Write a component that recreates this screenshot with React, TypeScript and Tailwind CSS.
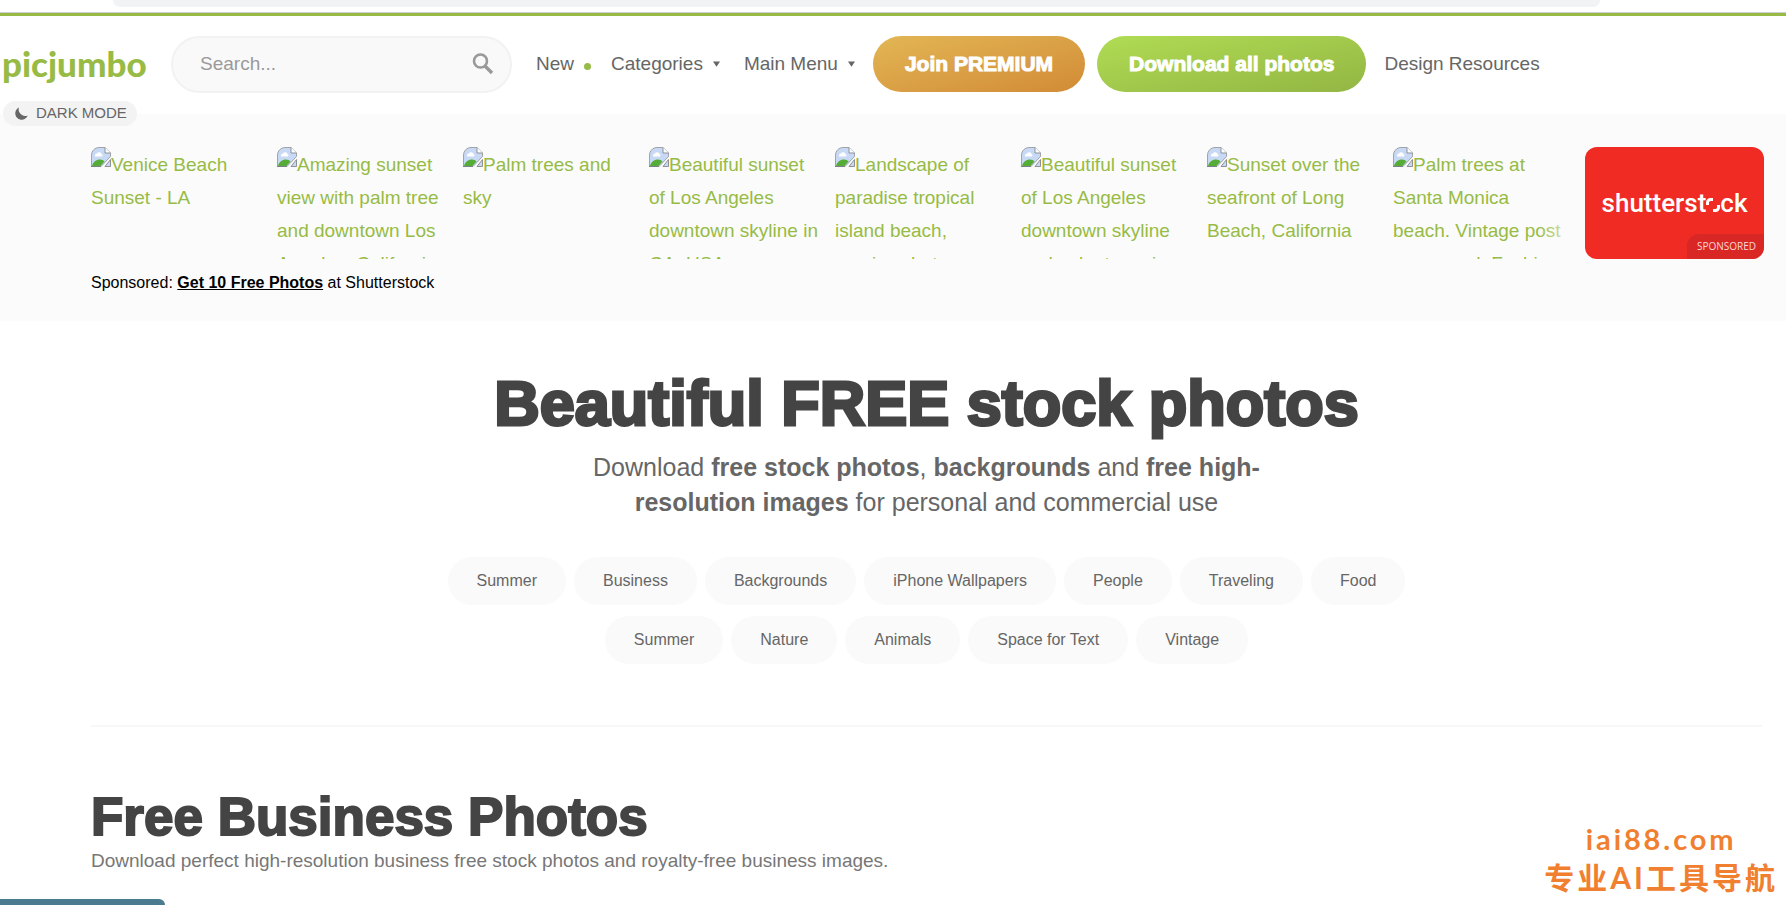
import type { ReactNode } from "react";

const SLIDES = [
  ["Venice Beach", "Sunset - LA"],
  ["Amazing sunset", "view with palm tree", "and downtown Los", "Angeles, California"],
  ["Palm trees and", "sky"],
  ["Beautiful sunset", "of Los Angeles", "downtown skyline in", "CA, USA"],
  ["Landscape of", "paradise tropical", "island beach,", "sunrise shot"],
  ["Beautiful sunset", "of Los Angeles", "downtown skyline", "and palm trees in"],
  ["Sunset over the", "seafront of Long", "Beach, California"],
  ["Palm trees at", "Santa Monica", "beach. Vintage post", "processed. Fashion"],
];

const TAGS = [
  ["Summer", "Business", "Backgrounds", "iPhone Wallpapers", "People", "Traveling", "Food"],
  ["Summer", "Nature", "Animals", "Space for Text", "Vintage"],
];

function MissingImage() {
  return (
    <svg viewBox="0 0 20 20" className="inline-block h-5 w-5 align-[4px]" aria-hidden="true">
      <path d="M.5 19.5V8A7.500 7.500 0 0 1 8 .5h6l5.500 5.500v3.500L10 19.500z" fill="#c8d9f5" stroke="#a0a3a7" />
      <path d="M14 .5V6h5.500" fill="#fff" stroke="#8e9195" />
      <path d="M4 8.500a2 2 0 0 1 2-2 2.500 2.500 0 0 1 4.500.5 1.500 1.500 0 0 1 .5 2.500H4z" fill="#fff" />
      <path d="M1 19c1-4 4-6.500 8-6.500 2 0 3.500.8 4.500 2L9.500 19z" fill="#55ad37" />
      <path d="M19.500 12.500v7H14z" fill="#c8d9f5" stroke="#8e9195" />
      <path d="M0 19.500h10" stroke="#7e8286" />
    </svg>
  );
}

function SearchIcon() {
  return (
    <svg viewBox="0 0 22 22" className="h-[22px] w-[22px]" fill="none" stroke="#999" aria-hidden="true">
      <circle cx="8.500" cy="8" r="6.500" strokeWidth="2.600" />
      <path d="M13 13l7 7" strokeWidth="3.400" />
    </svg>
  );
}

function NavLink({ children, arrow }: { children: ReactNode; arrow?: boolean }) {
  return (
    <a href="#" className="flex items-center whitespace-nowrap">
      {children}
      {arrow && (
        <svg viewBox="0 0 8 6" className="ml-2.5 h-1.5 w-[7px]" fill="#666" aria-hidden="true">
          <path d="M0 0h8L4 6z" />
        </svg>
      )}
    </a>
  );
}

/* White Shutterstock wordmark, the "o" is the broken viewfinder ring */
function ShutterstockLogo() {
  return (
    <span className="flex items-baseline font-['Roboto',sans-serif] text-[26px] leading-8 font-medium text-white">
      shutterst
      <svg viewBox="0 0 14 14" className="h-3.5 w-3.5" fill="none" stroke="#fff" strokeWidth="3" aria-hidden="true">
        <path d="M1.500 7V4.500a3 3 0 0 1 3-3H7" />
        <path d="M12.500 7v2.500a3 3 0 0 1-3 3H7" />
      </svg>
      ck
    </span>
  );
}

function Header() {
  return (
    <header className="relative flex h-[98px] items-center bg-white pb-0.5 text-[19px] text-[#666]">
      <a
        href="#"
        className="w-[147px] shrink-0 pb-0.5 pl-0.5 font-['Lato',sans-serif] text-[35px] leading-10 font-black text-[#97bb45]"
      >
        picjumbo
      </a>
      <form className="ml-6 flex h-[57px] w-[341px] shrink-0 items-center rounded-full border-2 border-[#f2f2f2] bg-[#f9f9f9] pr-4 pl-[27px]">
        <input
          type="search"
          aria-label="Search photos"
          placeholder="Search..."
          className="min-w-0 flex-1 bg-transparent outline-none placeholder:text-[#999]"
        />
        <button type="button" aria-label="Search">
          <SearchIcon />
        </button>
      </form>
      <nav className="ml-6 flex items-center">
        <NavLink>
          New
          <span className="mt-1 ml-2.5 h-[7px] w-[7px] rounded-full bg-[#97bb45]" />
        </NavLink>
        <span className="w-5" />
        <NavLink arrow>Categories</NavLink>
        <span className="w-6" />
        <NavLink arrow>Main Menu</NavLink>
      </nav>
      <div className="ml-[18px] flex gap-3 text-[21px] font-bold whitespace-nowrap text-white [-webkit-text-stroke:1px_#fff]">
        <a href="#" className="flex h-14 items-center rounded-full bg-linear-to-br from-[#e2b655] to-[#d28b35] px-8">
          Join PREMIUM
        </a>
        <a href="#" className="flex h-14 items-center rounded-full bg-linear-to-br from-[#b0dc54] to-[#93b643] px-8">
          Download all photos
        </a>
      </div>
      <a href="#" className="ml-[18px] whitespace-nowrap">
        Design Resources
      </a>

      <button
        type="button"
        className="absolute top-[85px] left-[3px] z-10 flex h-[25px] items-center gap-2 rounded-full bg-[#f3f3f3] pr-2.5 pl-3 text-[15px]"
      >
        <svg viewBox="0 0 13 13" className="h-[13px] w-[13px]" fill="#666" aria-hidden="true">
          <path d="M4 .5A6.400 6.400 0 1 0 12.700 8.500 6 6 0 0 1 7 8 6 6 0 0 1 4 .5z" />
        </svg>
        DARK MODE
      </button>
    </header>
  );
}

function SponsoredStrip() {
  return (
    <section className="bg-[#fbfbfb] pt-[33px] pr-[22px] pb-[26px] pl-[91px]">
      <div className="relative">
        <div className="flex h-28 gap-[18px] overflow-hidden text-[19px] leading-[33px] text-[#97bb45]">
          {SLIDES.map((lines, i) => (
            <a key={i} href="#" className="w-[168px] shrink-0 whitespace-nowrap">
              {lines.map((line, n) => (
                <span key={line} className="block">
                  {n === 0 && <MissingImage />}
                  {line}
                </span>
              ))}
            </a>
          ))}
        </div>
        <div className="absolute top-0 right-[179px] h-full w-12 bg-linear-to-r from-transparent to-[#fbfbfb]" />
        <a
          href="#"
          className="absolute top-0 right-0 flex h-full w-[179px] items-center justify-center overflow-hidden rounded-xl bg-[#ef2b24]"
        >
          <ShutterstockLogo />
          <span className="absolute right-0 bottom-0 flex h-[25px] items-center rounded-tl-xl bg-[#d82724] px-2 pl-2.5 font-['Open_Sans',sans-serif] text-[10px] text-[#fbd5d3]">
            SPONSORED
          </span>
        </a>
      </div>
      <p className="mt-3 leading-6 text-black">
        Sponsored:{" "}
        <a href="#" className="font-bold underline">
          Get 10 Free Photos
        </a>{" "}
        at Shutterstock
      </p>
    </section>
  );
}

function Hero() {
  return (
    <section className="border-b-2 border-[#f7f7f7] pt-[47px] pb-[61px] text-center">
      <h1 className="text-[63px] leading-[70px] font-bold text-[#444] [-webkit-text-stroke:3px_#444]">
        Beautiful FREE stock photos
      </h1>
      <p className="mx-auto mt-3 max-w-[700px] text-[25px] leading-[35px] text-[#666]">
        Download <b>free stock photos</b>, <b>backgrounds</b> and <b>free high-resolution images</b> for personal
        and commercial use
      </p>
      <div className="mt-[37px] flex flex-col gap-[11px]">
        {TAGS.map((row, i) => (
          <div key={i} className="flex justify-center gap-2">
            {row.map((tag) => (
              <a key={tag} href="#" className="rounded-full bg-[#fafafa] px-[29px] leading-[48px] text-[#666]">
                {tag}
              </a>
            ))}
          </div>
        ))}
      </div>
    </section>
  );
}

export default function App() {
  return (
    <div className="relative h-screen overflow-hidden bg-white font-['Liberation_Sans',Arial,sans-serif]">
      {/* Bottom edge of the browser's address bar */}
      <div className="h-3 pr-[186px] pl-[113px]">
        <div className="h-[7px] rounded-b-xl bg-[#f1f3f4]" />
      </div>
      <div className="h-1 border-t border-[#ccd0d6] bg-[#97bb45]" />

      <Header />
      <SponsoredStrip />

      <main className="pr-6 pl-[91px]">
        <Hero />
        <section className="pt-[60px]">
          <h2 className="text-[53px] leading-[60px] font-bold text-[#444] [-webkit-text-stroke:2px_#444]">
            Free Business Photos
          </h2>
          <p className="text-[19px] leading-7 text-[#777]">
            Download perfect high-resolution business free stock photos and royalty-free business images.
          </p>
        </section>
      </main>

      <div className="absolute bottom-0 left-0 h-1.5 w-[165px] rounded-tr-md bg-[#4a7b8f]" />

      <div className="absolute right-2 bottom-2 text-center font-['Lato','Noto_Sans_CJK_SC',sans-serif] font-bold text-[#f08030]">
        <p className="text-[29px] leading-9 tracking-widest">iai88.com</p>
        <p className="text-[30px] leading-10 tracking-widest">专业AI工具导航</p>
      </div>
    </div>
  );
}
